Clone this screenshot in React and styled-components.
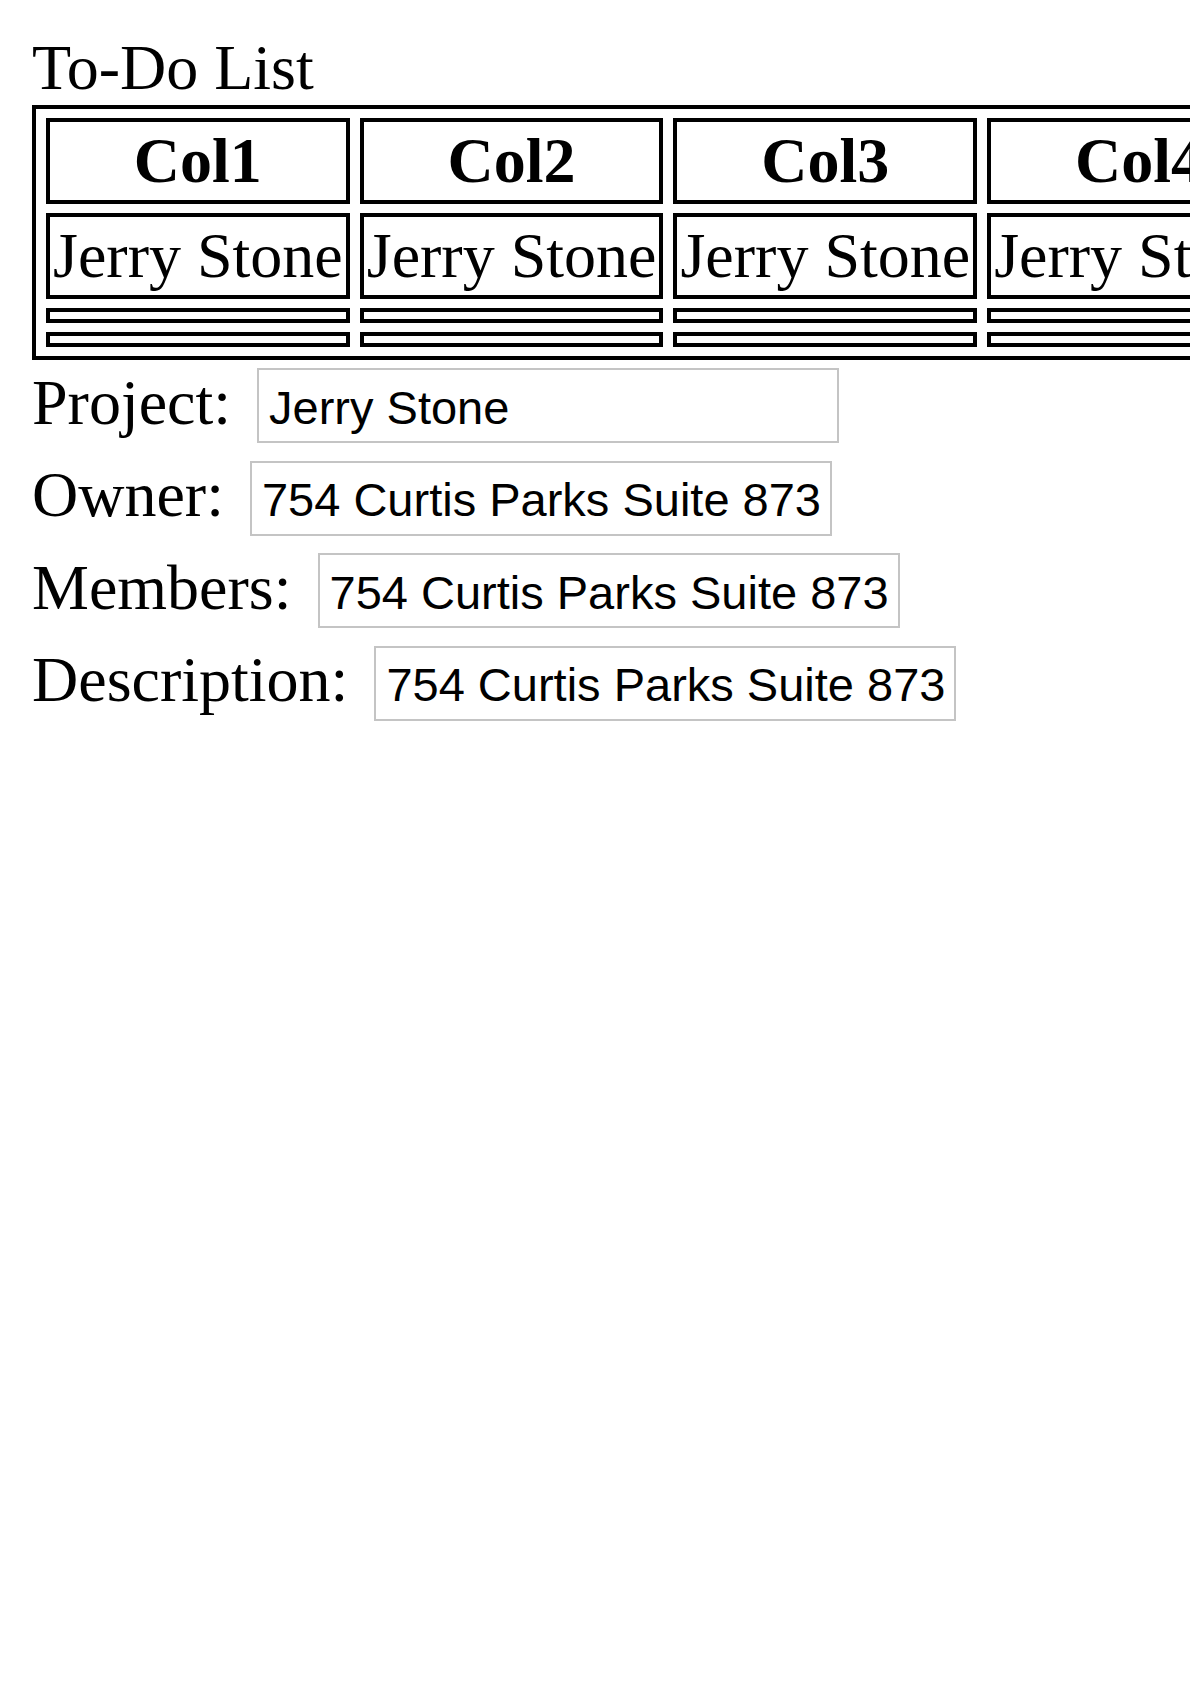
import React from 'react';
import styled, { createGlobalStyle } from 'styled-components';

const GlobalStyle = createGlobalStyle`
  html, body {
    margin: 0;
    padding: 0;
    background: #fff;
    overflow: hidden;
  }
  body {
    font-family: 'Liberation Serif', 'Times New Roman', serif;
    color: #000;
  }
`;

const Page = styled.div`
  padding: 31px 0 0 32px;
`;

const Title = styled.div`
  font-size: 64px;
  line-height: 73.6px;
  white-space: nowrap;
`;

const TodoTable = styled.table`
  border: 4px solid #000;
  border-spacing: 10px 9px;
  white-space: nowrap;
`;

const HeadCell = styled.th`
  border: 4px solid #000;
  padding: 3px;
  font-size: 64px;
  line-height: 72px;
  font-weight: bold;
  text-align: center;
`;

const Cell = styled.td`
  border: 4px solid #000;
  padding: ${p => (p.$empty ? '3.5px' : '3px')};
  font-size: 64px;
  line-height: 72px;
  text-align: left;
`;

const Form = styled.div`
  display: flex;
  flex-direction: column;
  gap: 15px;
  margin-top: 6px;
`;

const Row = styled.div`
  display: flex;
  align-items: baseline;
  gap: 26px;
`;

const Label = styled.label`
  font-size: 64px;
  line-height: 73.6px;
  white-space: nowrap;
`;

const Field = styled.input`
  box-sizing: border-box;
  width: 582px;
  height: 75px;
  padding: 3px 10px 0;
  border: 2px solid #c4c4c4;
  border-radius: 0;
  outline: none;
  font-family: 'Liberation Sans', Arial, sans-serif;
  font-size: 47px;
  color: #000;
  background: #fff;
`;

const columns = ['Col1', 'Col2', 'Col3', 'Col4', 'Col5'];

const fields = [
  { label: 'Project:', value: 'Jerry Stone' },
  { label: 'Owner:', value: '754 Curtis Parks Suite 873' },
  { label: 'Members:', value: '754 Curtis Parks Suite 873' },
  { label: 'Description:', value: '754 Curtis Parks Suite 873' },
];

const App = () => (
  <Page>
    <GlobalStyle />
    <Title>To-Do List</Title>
    <TodoTable>
      <thead>
        <tr>
          {columns.map(col => (
            <HeadCell key={col}>{col}</HeadCell>
          ))}
        </tr>
      </thead>
      <tbody>
        <tr>
          {columns.map(col => (
            <Cell key={col}>Jerry Stone</Cell>
          ))}
        </tr>
        {[0, 1].map(row => (
          <tr key={row}>
            {columns.map(col => (
              <Cell key={col} $empty />
            ))}
          </tr>
        ))}
      </tbody>
    </TodoTable>
    <Form>
      {fields.map(f => (
        <Row key={f.label}>
          <Label>{f.label}</Label>
          <Field type="text" defaultValue={f.value} readOnly />
        </Row>
      ))}
    </Form>
  </Page>
);

export default App;
